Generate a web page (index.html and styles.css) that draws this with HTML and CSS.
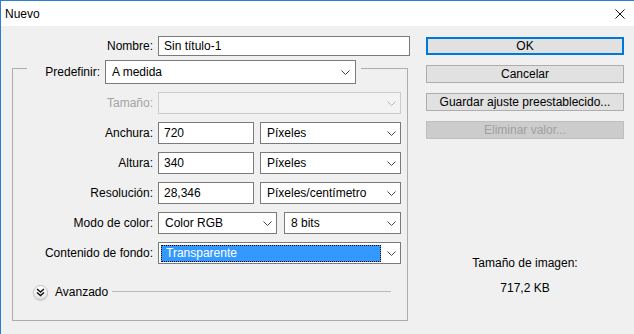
FILE: index.html
```html
<!DOCTYPE html>
<html>
<head>
<meta charset="utf-8">
<link rel="stylesheet" href="styles.css">
</head>
<body>
<div class="window">
  <div class="titlebar">
    <span class="title">Nuevo</span>
    <svg class="close" width="10" height="10" viewBox="0 0 10 10"><path d="M0.5 0.5 L9.5 9.5 M9.5 0.5 L0.5 9.5" stroke="#111" stroke-width="1" fill="none"/></svg>
  </div>
  <div class="content">
    <div class="left">
      <div class="name-row">
        <span class="lbl">Nombre:</span>
        <div class="field">Sin título-1</div>
      </div>
      <div class="preset">
        <span class="lbl preset-lbl">Predefinir:</span>
        <div class="field select preset-sel"><span>A medida</span><svg class="chev" width="9" height="5" viewBox="0 0 9 5"><polyline points="0.5,0.5 4.5,4.5 8.5,0.5" fill="none" stroke="#444" stroke-width="1"/></svg></div>
      </div>
      <div class="group">
        <div class="grow">
          <span class="lbl disabled">Tamaño:</span>
          <div class="field select off"><span></span><svg class="chev" width="9" height="5" viewBox="0 0 9 5"><polyline points="0.5,0.5 4.5,4.5 8.5,0.5" fill="none" stroke="#b4b4b4" stroke-width="1"/></svg></div>
        </div>
        <div class="grow">
          <span class="lbl">Anchura:</span>
          <div class="pair split-a">
            <div class="field">720</div>
            <div class="field select"><span>Píxeles</span><svg class="chev" width="9" height="5" viewBox="0 0 9 5"><polyline points="0.5,0.5 4.5,4.5 8.5,0.5" fill="none" stroke="#444" stroke-width="1"/></svg></div>
          </div>
        </div>
        <div class="grow">
          <span class="lbl">Altura:</span>
          <div class="pair split-a">
            <div class="field">340</div>
            <div class="field select"><span>Píxeles</span><svg class="chev" width="9" height="5" viewBox="0 0 9 5"><polyline points="0.5,0.5 4.5,4.5 8.5,0.5" fill="none" stroke="#444" stroke-width="1"/></svg></div>
          </div>
        </div>
        <div class="grow">
          <span class="lbl">Resolución:</span>
          <div class="pair split-a">
            <div class="field">28,346</div>
            <div class="field select"><span>Píxeles/centímetro</span><svg class="chev" width="9" height="5" viewBox="0 0 9 5"><polyline points="0.5,0.5 4.5,4.5 8.5,0.5" fill="none" stroke="#444" stroke-width="1"/></svg></div>
          </div>
        </div>
        <div class="grow">
          <span class="lbl">Modo de color:</span>
          <div class="pair split-b">
            <div class="field select"><span>Color RGB</span><svg class="chev" width="9" height="5" viewBox="0 0 9 5"><polyline points="0.5,0.5 4.5,4.5 8.5,0.5" fill="none" stroke="#444" stroke-width="1"/></svg></div>
            <div class="field select"><span>8 bits</span><svg class="chev" width="9" height="5" viewBox="0 0 9 5"><polyline points="0.5,0.5 4.5,4.5 8.5,0.5" fill="none" stroke="#444" stroke-width="1"/></svg></div>
          </div>
        </div>
        <div class="grow">
          <span class="lbl">Contenido de fondo:</span>
          <div class="field select focus"><span class="hl">Transparente</span><svg class="chev" width="9" height="5" viewBox="0 0 9 5"><polyline points="0.5,0.5 4.5,4.5 8.5,0.5" fill="none" stroke="#444" stroke-width="1"/></svg></div>
        </div>
        <div class="advanced">
          <span class="adv-btn"><svg width="9" height="9" viewBox="0 0 9 9"><polyline points="1,1 4.5,4 8,1" fill="none" stroke="#111" stroke-width="1.4"/><polyline points="1,4.5 4.5,7.5 8,4.5" fill="none" stroke="#111" stroke-width="1.4"/></svg></span>
          <span class="adv-text">Avanzado</span>
          <span class="adv-line"></span>
        </div>
      </div>
    </div>
    <div class="right">
      <div class="btn primary">OK</div>
      <div class="btn">Cancelar</div>
      <div class="btn">Guardar ajuste preestablecido...</div>
      <div class="btn disabled-btn">Eliminar valor...</div>
      <div class="info">
        <div class="info-line">Tamaño de imagen:</div>
        <div class="info-line">717,2 KB</div>
      </div>
    </div>
  </div>
</div>
</body>
</html>
```

FILE: styles.css
```css
* { box-sizing: border-box; }
html, body {
  margin: 0;
  padding: 0;
  width: 634px;
  height: 334px;
  overflow: hidden;
  background: #f0f0f0;
  font-family: "Liberation Sans", Arial, sans-serif;
  font-size: 12px;
  color: #000;
}
.window {
  width: 634px;
  height: 334px;
  border-top: 1px solid #2a7fd3;
  border-left: 1px solid #2a7fd3;
  background: #f0f0f0;
}
.titlebar {
  height: 25px;
  background: #fff;
  display: flex;
  align-items: center;
  justify-content: space-between;
  padding-left: 4px;
  padding-right: 9px;
}
.title { line-height: 16px; }
.close { display: block; }
.content {
  display: flex;
  height: 308px;
}
.left {
  width: 407px;
  padding-left: 11px;
  padding-top: 10px;
}
.lbl {
  display: block;
  text-align: right;
  white-space: nowrap;
  line-height: 16px;
}
.disabled { color: #a3a3a3; }
.name-row {
  display: grid;
  grid-template-columns: 141px 252px;
  column-gap: 5px;
  align-items: center;
  height: 20px;
}
.field {
  height: 100%;
  border: 1px solid #7a7a7a;
  background: #fff;
  padding-left: 5px;
  display: flex;
  align-items: center;
  white-space: nowrap;
  line-height: 16px;
}
.select {
  justify-content: space-between;
  padding-right: 4px;
}
.chev { display: block; flex: none; }
.preset {
  position: relative;
  z-index: 1;
  margin-top: 4px;
  margin-left: 15px;
  width: 334px;
  height: 24px;
  display: flex;
  align-items: center;
  gap: 5px;
  padding-right: 5px;
  background: #f0f0f0;
}
.preset-lbl { width: 73px; }
.preset-sel { width: 251px; padding-left: 6px; padding-right: 5px; }
.group {
  margin-top: -16px;
  width: 396px;
  height: 253px;
  border: 1px solid #adadad;
  padding: 23px 6px 20px 0;
  display: flex;
  flex-direction: column;
  gap: 8px;
}
.grow {
  display: grid;
  grid-template-columns: 140px 243px;
  column-gap: 5px;
  align-items: center;
  height: 22px;
}
.grow > .field, .pair { height: 22px; }
.pair { display: grid; }
.split-a { grid-template-columns: 96px 141px; column-gap: 6px; }
.split-b { grid-template-columns: 119px 117px; column-gap: 7px; }
.pair .select { padding-left: 6px; }
.off {
  border-color: #cccccc;
  background: #f3f3f3;
}
.focus { padding-left: 2px; }
.hl {
  width: 220px;
  height: 17px;
  background: #3399ff;
  color: #fff;
  border: 1px dotted #000;
  padding-left: 4px;
  line-height: 15px;
}
.advanced {
  margin-top: 12px;
  height: 16px;
  display: flex;
  align-items: center;
  padding-left: 20px;
  padding-right: 10px;
}
.adv-btn {
  width: 15px;
  height: 15px;
  border-radius: 50%;
  border: 1px solid #c2c2c2;
  background: linear-gradient(#ffffff, #e6e6e6);
  box-shadow: 0 1px 1px rgba(0,0,0,0.15);
  display: flex;
  align-items: center;
  justify-content: center;
  flex: none;
}
.adv-btn svg { display: block; }
.adv-text {
  margin-left: 7px;
  line-height: 16px;
}
.adv-line {
  flex: 1;
  height: 1px;
  background: #b9b9b9;
  margin-left: 4px;
  margin-top: -1px;
}
.right {
  margin-left: 18px;
  width: 198px;
  padding-top: 11px;
  display: flex;
  flex-direction: column;
}
.btn {
  height: 18px;
  border: 1px solid #adadad;
  background: #e1e1e1;
  text-align: center;
  line-height: 16px;
  margin-bottom: 10px;
}
.primary {
  border: 2px solid #0078d7;
  line-height: 14px;
}
.disabled-btn {
  background: #cccccc;
  border-color: #bfbfbf;
  color: #a0a0a0;
}
.info {
  margin-top: 106px;
  text-align: center;
}
.info-line {
  line-height: 16px;
  margin-bottom: 9px;
}
```
